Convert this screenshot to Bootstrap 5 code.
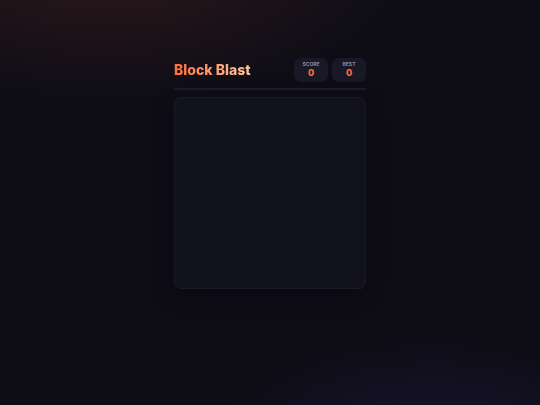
<!DOCTYPE html>
<html lang="en">
<head>
<meta charset="utf-8">
<meta name="viewport" content="width=device-width, initial-scale=1">
<title>Block Blast</title>
<link href="https://cdn.jsdelivr.net/npm/bootstrap@5.3.0/dist/css/bootstrap.min.css" rel="stylesheet">
<style>
body {
  background:
    radial-gradient(ellipse 80% 50% at 20% -10%, rgba(255, 107, 53, .13), transparent 70%),
    radial-gradient(ellipse 60% 40% at 80% 110%, rgba(90, 60, 200, .15), transparent 66%),
    #0e0d16;
  font-family: Inter, "Open Sans", sans-serif;
}
.game { max-width: 192px; padding-top: 58px; }
.game-header { padding-bottom: 6px; border-bottom: 2px solid #1c1a2e; margin-bottom: 7px; }
.game-title {
  font-size: 14px;
  line-height: 20px;
  font-weight: 800;
  background: linear-gradient(90deg, #ff7040, #ffc8a0);
  -webkit-background-clip: text;
  background-clip: text;
  color: transparent;
}
.score-box { width: 34px; padding: 4px 0; background: #191826; border-radius: 7px; }
.score-name { font-size: 5px; line-height: 5px; font-weight: 700; color: #8c8a9c; }
.score-value { font-size: 9px; line-height: 11px; font-weight: 800; color: #ff6b3d; }
.board {
  background: #12111e;
  border: 1px solid #1a1929;
  border-radius: 7px;
  box-shadow: 0 6px 22px rgba(0, 0, 0, .3);
}
</style>
</head>
<body class="min-vh-100">
<main class="game mx-auto">
  <header class="game-header d-flex align-items-center justify-content-between">
    <h1 class="game-title mb-0">Block Blast</h1>
    <div class="d-flex gap-1 text-center">
      <div class="score-box">
        <div class="score-name text-uppercase">Score</div>
        <div class="score-value">0</div>
      </div>
      <div class="score-box">
        <div class="score-name text-uppercase">Best</div>
        <div class="score-value">0</div>
      </div>
    </div>
  </header>
  <div class="board ratio ratio-1x1" role="img" aria-label="Empty game board"></div>
</main>
<script src="https://cdn.jsdelivr.net/npm/bootstrap@5.3.0/dist/js/bootstrap.bundle.min.js"></script>
</body>
</html>
